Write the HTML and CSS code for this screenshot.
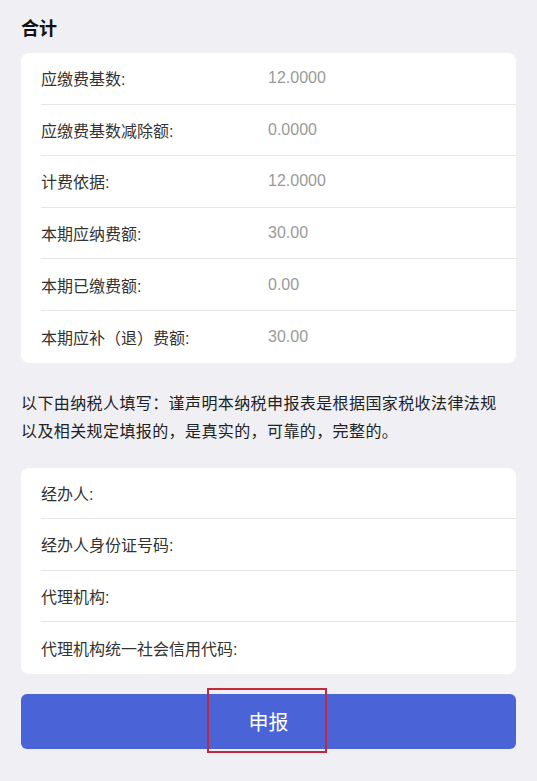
FILE: index.html
```html
<!DOCTYPE html>
<html lang="zh-CN">
<head>
<meta charset="utf-8">
<link rel="stylesheet" href="styles.css">
</head>
<body>
<div class="page">
  <h2 class="title">合计</h2>
  <div class="card">
    <div class="row"><span class="label">应缴费基数:</span><span class="value">12.0000</span></div>
    <div class="row"><span class="label">应缴费基数减除额:</span><span class="value">0.0000</span></div>
    <div class="row"><span class="label">计费依据:</span><span class="value">12.0000</span></div>
    <div class="row"><span class="label">本期应纳费额:</span><span class="value">30.00</span></div>
    <div class="row"><span class="label">本期已缴费额:</span><span class="value">0.00</span></div>
    <div class="row"><span class="label">本期应补（退）费额:</span><span class="value">30.00</span></div>
  </div>
  <p class="notice">以下由纳税人填写：谨声明本纳税申报表是根据国家税收法律法规以及相关规定填报的，是真实的，可靠的，完整的。</p>
  <div class="card card2">
    <div class="row"><span class="label">经办人:</span></div>
    <div class="row"><span class="label">经办人身份证号码:</span></div>
    <div class="row"><span class="label">代理机构:</span></div>
    <div class="row"><span class="label">代理机构统一社会信用代码:</span></div>
  </div>
  <div class="btn-wrap">
    <button class="submit">申报</button>
    <span class="highlight"></span>
  </div>
</div>
</body>
</html>
```
FILE: styles.css
```css
html, body {
  margin: 0;
  padding: 0;
  background: #efeff4;
}
body {
  font-family: "Liberation Sans", "Noto Sans CJK SC", sans-serif;
  color: #333;
}
.page {
  padding: 17px 21px 40px 21px;
}
.title {
  margin: 0;
  font-size: 18px;
  font-weight: bold;
  line-height: 24px;
  color: #111;
}
.card {
  margin-top: 12px;
  background: #fff;
  border-radius: 8px;
  padding-left: 20px;
}
.row {
  display: flex;
  align-items: center;
  height: 51.6px;
  border-bottom: 1px solid #e6e6e6;
  box-sizing: border-box;
}
.row:last-child {
  border-bottom: none;
}
.label {
  width: 227px;
  font-size: 16px;
  color: #333;
}
.value {
  font-size: 16px;
  color: #9a9a9a;
}
.notice {
  margin: 27px 0 0 0;
  max-width: 486px;
  font-size: 16px;
  line-height: 28px;
  color: #222;
  letter-spacing: 0.4px;
}
.card2 {
  margin-top: 22px;
}
.btn-wrap {
  position: relative;
  margin-top: 20px;
}
.submit {
  display: block;
  width: 100%;
  height: 55px;
  border: none;
  border-radius: 6px;
  background: #4a63d6;
  color: #fff;
  font-family: "Liberation Sans", "Noto Sans CJK SC", sans-serif;
  font-size: 20px;
}
.highlight {
  position: absolute;
  z-index: 2;
  left: 186px;
  top: -6px;
  width: 116px;
  height: 61px;
  border: 2px solid #c4283f;
}
```
